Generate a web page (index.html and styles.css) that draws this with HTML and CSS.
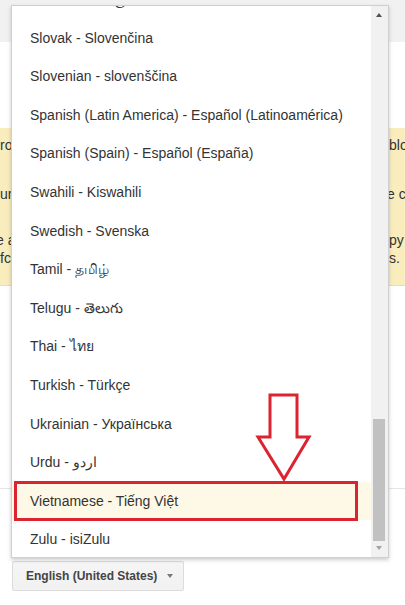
FILE: index.html
```html
<!DOCTYPE html>
<html>
  <head>
    <title>Language</title>
    <link rel="stylesheet" href="styles.css">
  </head>
  <body>
    <div class="topbar"></div>
    <div class="notice">
      <div class="line first"><span class="left">rop</span><span class="right">block</span></div>
      <div class="line second"><span class="left">ur</span><span class="right cut">e cookies</span></div>
      <div class="line third"><span class="left cut">e a</span><span class="right">py of</span></div>
      <div class="line"><span class="left">fc</span><span class="right">s.</span></div>
    </div>
    <div class="rule"></div>
    <div class="footer">
      <button class="lang-btn">English (United States) <span class="caret"></span></button>
    </div>

    <div class="lang-menu">
      <div class="lang-list">
        <div class="item">Sinhala - සිංහල</div>
        <div class="item">Slovak - Slovenčina</div>
        <div class="item">Slovenian - slovenščina</div>
        <div class="item">Spanish (Latin America) - Español (Latinoamérica)</div>
        <div class="item">Spanish (Spain) - Español (España)</div>
        <div class="item">Swahili - Kiswahili</div>
        <div class="item">Swedish - Svenska</div>
        <div class="item">Tamil - தமிழ்</div>
        <div class="item">Telugu - తెలుగు</div>
        <div class="item">Thai - ไทย</div>
        <div class="item">Turkish - Türkçe</div>
        <div class="item">Ukrainian - Українська</div>
        <div class="item">Urdu - اردو</div>
        <div class="item hover">Vietnamese - Tiếng Việt</div>
        <div class="item">Zulu - isiZulu</div>
      </div>
      <div class="scrollbar">
        <span class="up"></span>
        <span class="thumb"></span>
        <span class="down"></span>
      </div>
    </div>

    <div class="mark-box"></div>
    <svg class="mark-arrow" width="58" height="92" viewBox="0 0 58 92">
      <path d="M15 3 H42 V45 H54 L29 87 L3 45 H15 Z" fill="#fff" stroke="#dc2430" stroke-width="3" stroke-linejoin="miter"/>
    </svg>
  </body>
</html>
```

FILE: styles.css
```css
body {
  margin: 0;
  background-color: #FFF;
  font-family: "Liberation Sans", Arial, sans-serif;
  color: #333;
  overflow: hidden;
}
.topbar {
  height: 42px;
  background-color: #F1F1F1;
}
.notice {
  margin-top: 86px;
  height: 158px;
  box-sizing: border-box;
  padding-top: 8px;
  background-color: #F9EDBE;
  border-bottom: 1px solid #F0DFA0;
  font-size: 14px;
  line-height: 18px;
  white-space: nowrap;
  overflow: hidden;
}
.line {
  display: grid;
  grid-template-columns: 389px auto;
}
.line.first {
  margin-bottom: 31px;
}
.line.second {
  margin-bottom: 28px;
}
.left.cut {
  margin-left: -4px;
}
.right.cut {
  margin-left: -2px;
}
.rule {
  margin-top: 202px;
  height: 1px;
  background-color: #E5E5E5;
}
.footer {
  padding: 72px 12px 0;
}
.lang-btn {
  display: flex;
  align-items: center;
  width: 172px;
  height: 30px;
  padding: 0 0 0 13px;
  border: 1px solid #DCDCDC;
  border-radius: 2px;
  background: linear-gradient(#F5F5F5, #F1F1F1);
  color: #444;
  font-family: "Liberation Sans", Arial, sans-serif;
  font-size: 12px;
  font-weight: bold;
}
.caret {
  margin-left: 10px;
  width: 0;
  height: 0;
  border-left: 3.5px solid transparent;
  border-right: 3.5px solid transparent;
  border-top: 4px solid #777;
}
.lang-menu {
  position: absolute;
  top: 5px;
  left: 11px;
  width: 376px;
  height: 551px;
  display: flex;
  background-color: #FFF;
  border: 1px solid #CFCFCF;
  box-shadow: 0 2px 4px rgba(0, 0, 0, 0.2);
  overflow: hidden;
}
.lang-list {
  flex: 1;
  margin-top: -25.9px;
}
.item {
  height: 38.6px;
  line-height: 38.6px;
  padding-left: 18px;
  font-size: 14px;
  color: #333;
  white-space: nowrap;
}
.item.hover {
  background-color: #FEF8E6;
}
.scrollbar {
  position: relative;
  width: 17px;
  background-color: #F1F1F1;
}
.up, .down {
  position: absolute;
  left: 5px;
  width: 0;
  height: 0;
  border-left: 3.5px solid transparent;
  border-right: 3.5px solid transparent;
}
.up {
  top: 7px;
  border-bottom: 4px solid #505050;
}
.down {
  bottom: 7px;
  border-top: 4px solid #A3A3A3;
}
.thumb {
  position: absolute;
  left: 2px;
  right: 3px;
  top: 413px;
  height: 122px;
  background-color: #C1C1C1;
}
.mark-box {
  position: absolute;
  left: 14px;
  top: 481px;
  width: 344px;
  height: 40px;
  box-sizing: border-box;
  border: 3px solid #DC2430;
}
.mark-arrow {
  position: absolute;
  left: 255px;
  top: 392px;
}
```
